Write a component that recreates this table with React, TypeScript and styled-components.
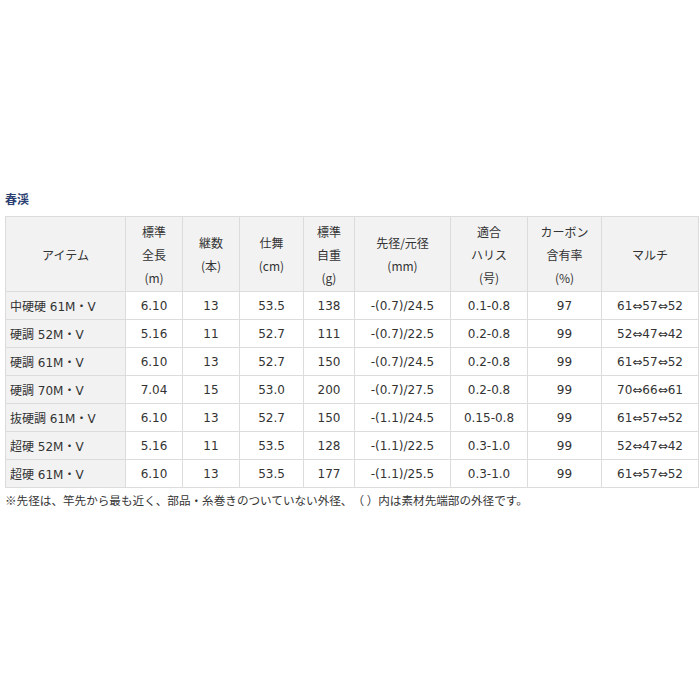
import React from "react";
import styled, { createGlobalStyle } from "styled-components";

const Global = createGlobalStyle`
  html, body { margin: 0; padding: 0; background: #fff; }
  body { font-family: "DejaVu Sans", "Noto Sans CJK JP", sans-serif; color: #333; }
`;

const Page = styled.div`
  padding: 190px 2px 0 5px;
`;

const Title = styled.h3`
  margin: 0 0 9px 0;
  font-size: 12px;
  line-height: 17px;
  font-weight: bold;
  color: #2b3f72;
  font-family: "Noto Sans CJK JP", sans-serif;
`;

const Table = styled.table`
  border-collapse: collapse;
  table-layout: fixed;
  width: 693px;
  font-size: 12px;
`;

const Th = styled.th`
  background: #f2f2f2;
  border: 1px solid #dcdcdc;
  font-weight: normal;
  line-height: 23px;
  height: 74px;
  padding: 0;
  text-align: center;
  vertical-align: middle;
  font-family: "Noto Sans CJK JP", sans-serif;
`;

const Td = styled.td<{ $label?: boolean }>`
  border: 1px solid #dcdcdc;
  height: 27px;
  padding: 0 ${(p) => (p.$label ? "4px" : "0")};
  text-align: ${(p) => (p.$label ? "left" : "center")};
  background: ${(p) => (p.$label ? "#f2f2f2" : "#fff")};
  white-space: nowrap;
`;

const Note = styled.p`
  margin: 4px 0 0 0;
  font-size: 11.6px;
  font-family: "Noto Sans CJK JP", sans-serif;
  text-spacing-trim: space-all;
`;

const widths = [120, 57, 57, 64, 51, 96, 77, 74, 97];

const headers: string[][] = [
  ["アイテム"],
  ["標準", "全長", "(m)"],
  ["継数", "(本)"],
  ["仕舞", "(cm)"],
  ["標準", "自重", "(g)"],
  ["先径/元径", "(mm)"],
  ["適合", "ハリス", "(号)"],
  ["カーボン", "含有率", "(%)"],
  ["マルチ"],
];

const rows: string[][] = [
  ["中硬硬 61M・V", "6.10", "13", "53.5", "138", "-(0.7)/24.5", "0.1-0.8", "97", "61⇔57⇔52"],
  ["硬調 52M・V", "5.16", "11", "52.7", "111", "-(0.7)/22.5", "0.2-0.8", "99", "52⇔47⇔42"],
  ["硬調 61M・V", "6.10", "13", "52.7", "150", "-(0.7)/24.5", "0.2-0.8", "99", "61⇔57⇔52"],
  ["硬調 70M・V", "7.04", "15", "53.0", "200", "-(0.7)/27.5", "0.2-0.8", "99", "70⇔66⇔61"],
  ["抜硬調 61M・V", "6.10", "13", "52.7", "150", "-(1.1)/24.5", "0.15-0.8", "99", "61⇔57⇔52"],
  ["超硬 52M・V", "5.16", "11", "53.5", "128", "-(1.1)/22.5", "0.3-1.0", "99", "52⇔47⇔42"],
  ["超硬 61M・V", "6.10", "13", "53.5", "177", "-(1.1)/25.5", "0.3-1.0", "99", "61⇔57⇔52"],
];

export default function App() {
  return (
    <Page>
      <Global />
      <Title>春渓</Title>
      <Table>
        <colgroup>
          {widths.map((w, i) => (
            <col key={i} style={{ width: w }} />
          ))}
        </colgroup>
        <thead>
          <tr>
            {headers.map((h, i) => (
              <Th key={i}>
                {h.map((line, j) => (
                  <React.Fragment key={j}>
                    {j > 0 && <br />}
                    {line}
                  </React.Fragment>
                ))}
              </Th>
            ))}
          </tr>
        </thead>
        <tbody>
          {rows.map((r, i) => (
            <tr key={i}>
              {r.map((c, j) => (
                <Td key={j} $label={j === 0}>
                  {c}
                </Td>
              ))}
            </tr>
          ))}
        </tbody>
      </Table>
      <Note>※先径は、竿先から最も近く、部品・糸巻きのついていない外径、（ ）内は素材先端部の外径です。</Note>
    </Page>
  );
}
